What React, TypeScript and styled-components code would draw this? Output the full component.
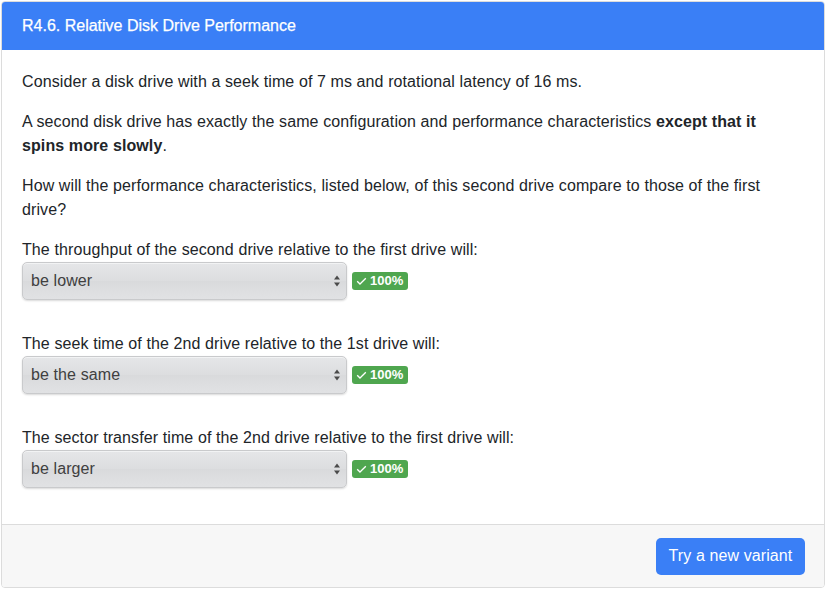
import React from "react";
import styled, { createGlobalStyle } from "styled-components";

const Global = createGlobalStyle`
  html, body { margin: 0; padding: 0; background: #fff; }
  body { font-family: "Liberation Sans", Arial, sans-serif; color: #212529; font-size: 16px; line-height: 1.5; letter-spacing: 0.1px; }
  * { box-sizing: border-box; }
`;

const Card = styled.div`
  margin: 1px 2px 2px 1px;
  border: 1px solid #dcdcdc;
  border-radius: 4px;
  overflow: hidden;
  display: flex;
  flex-direction: column;
  height: 587px;
`;

const Header = styled.div`
  background: #3a7ff6;
  color: #fff;
  height: 48px;
  display: flex;
  align-items: center;
  padding: 0 20px;
  font-size: 16px;
  letter-spacing: 0;
`;

const HeaderText = styled.span`
  font-weight: 500;
  -webkit-text-stroke: 0.25px #fff;
`;

const Body = styled.div`
  flex: 1;
  padding: 20px 20px 0 20px;
`;

const P = styled.p`
  margin: 0 0 16px 0;
  line-height: 24px;
  padding-right: 10px;
`;

const Label = styled.div`
  line-height: 24px;
`;

const Row = styled.div`
  display: flex;
  align-items: center;
  gap: 5px;
  margin-bottom: 32px;
`;

const Select = styled.div`
  width: 325px;
  height: 38px;
  border-radius: 5px;
  border: 1px solid #c9cacc;
  background: linear-gradient(#e5e6e8, #dcdddf 50%, #d9dadc 51%, #e1e2e4);
  box-shadow: 0 1px 2px rgba(0, 0, 0, 0.15), inset 0 1px 0 rgba(255,255,255,0.5);
  display: flex;
  align-items: center;
  justify-content: space-between;
  padding: 0 4px 0 8px;
  color: #404040;
  font-size: 16px;
`;

const Arrows = styled.svg`
  width: 10px;
  height: 16px;
`;

const Badge = styled.span`
  background: #4fa64f;
  color: #fff;
  font-size: 13px;
  font-weight: 700;
  border-radius: 3px;
  padding: 0 5px 0 4px;
  height: 18px;
  line-height: 18px;
  display: inline-flex;
  align-items: center;
  gap: 3px;
  letter-spacing: 0;
`;

const Footer = styled.div`
  background: #f7f7f7;
  border-top: 1px solid #dcdcdc;
  height: 63px;
  display: flex;
  justify-content: flex-end;
  align-items: center;
  padding: 0 19px 0 20px;
`;

const Button = styled.button`
  background: #3a7ff6;
  color: #fff;
  border: none;
  border-radius: 5px;
  height: 37px;
  width: 149px;
  padding: 0;
  font-family: inherit;
  font-size: 16px;
  letter-spacing: 0.1px;
`;

const questions = [
  { label: "The throughput of the second drive relative to the first drive will:", value: "be lower" },
  { label: "The seek time of the 2nd drive relative to the 1st drive will:", value: "be the same" },
  { label: "The sector transfer time of the 2nd drive relative to the first drive will:", value: "be larger" },
];

export default function App() {
  return (
    <>
      <Global />
      <Card>
        <Header>
          <HeaderText>R4.6. Relative Disk Drive Performance</HeaderText>
        </Header>
        <Body>
          <P>Consider a disk drive with a seek time of 7 ms and rotational latency of 16 ms.</P>
          <P>
            A second disk drive has exactly the same configuration and performance characteristics{" "}
            <b>except that it spins more slowly</b>.
          </P>
          <P>How will the performance characteristics, listed below, of this second drive compare to those of the first drive?</P>
          {questions.map((q) => (
            <div key={q.label}>
              <Label>{q.label}</Label>
              <Row>
                <Select>
                  <span>{q.value}</span>
                  <Arrows viewBox="0 0 10 16">
                    <path d="M2 6.5 L5 2.5 L8 6.5 Z" fill="#4a4a4a" />
                    <path d="M2 9.5 L5 13.5 L8 9.5 Z" fill="#4a4a4a" />
                  </Arrows>
                </Select>
                <Badge>
                  <svg width="11" height="10" viewBox="0 0 11 10">
                    <path d="M1.2 5.2 L4 8 L9.8 2.2" stroke="#fff" strokeWidth="1.3" fill="none" />
                  </svg>
                  100%
                </Badge>
              </Row>
            </div>
          ))}
        </Body>
        <Footer>
          <Button>Try a new variant</Button>
        </Footer>
      </Card>
    </>
  );
}
